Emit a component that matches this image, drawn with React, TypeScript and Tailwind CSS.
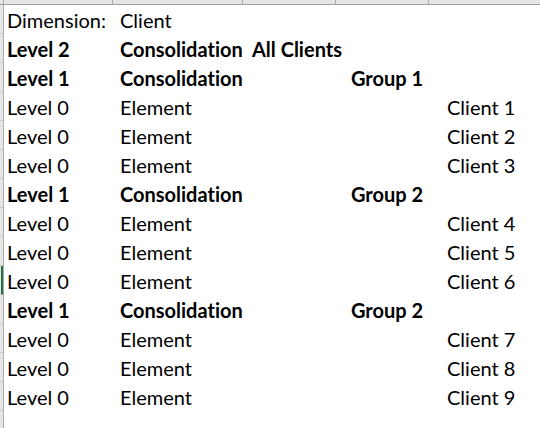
import React from 'react';

type Row = { level: string; kind: string; c?: string; d?: string; e?: string; bold?: boolean };

const rows: Row[] = [
  { level: 'Level 2', kind: 'Consolidation', c: 'All Clients', bold: true },
  { level: 'Level 1', kind: 'Consolidation', d: 'Group 1', bold: true },
  { level: 'Level 0', kind: 'Element', e: 'Client 1' },
  { level: 'Level 0', kind: 'Element', e: 'Client 2' },
  { level: 'Level 0', kind: 'Element', e: 'Client 3' },
  { level: 'Level 1', kind: 'Consolidation', d: 'Group 2', bold: true },
  { level: 'Level 0', kind: 'Element', e: 'Client 4' },
  { level: 'Level 0', kind: 'Element', e: 'Client 5' },
  { level: 'Level 0', kind: 'Element', e: 'Client 6' },
  { level: 'Level 1', kind: 'Consolidation', d: 'Group 2', bold: true },
  { level: 'Level 0', kind: 'Element', e: 'Client 7' },
  { level: 'Level 0', kind: 'Element', e: 'Client 8' },
  { level: 'Level 0', kind: 'Element', e: 'Client 9' },
];

const cols = 'grid grid-cols-[116px_132px_99px_96px_1fr] h-[29px] items-center whitespace-nowrap';

export default function App() {
  return (
    <div className="w-[540px] h-[428px] overflow-hidden bg-white text-black text-[20px] [font-variant-ligatures:none] font-['Lato','Liberation_Sans',sans-serif]">
      {/* column header strip, cut off at the top */}
      <div className="flex h-[5px] bg-[#e6e6e6] border-b border-[#9e9e9e]">
        <div className="w-[4px] border-r border-[#ababab]" />
        <div className="w-[109px] border-r border-[#ababab]" />
        <div className="w-[130px] border-r border-[#ababab]" />
        <div className="w-[93px] border-r border-[#ababab]" />
        <div className="w-[93px] border-r border-[#ababab]" />
        <div className="flex-1" />
      </div>

      <div className="flex">
        {/* row header strip */}
        <div className="w-[4px] flex flex-col bg-[#e6e6e6] border-r border-[#ababab]">
          {Array.from({ length: 15 }).map((_, i) => (
            <div
              key={i}
              className={
                i === 9
                  ? 'h-[29px] border-b border-[#c8c8c8] border-r-2 border-r-[#217346]'
                  : 'h-[29px] border-b border-[#c8c8c8]'
              }
            />
          ))}
        </div>

        <div className="flex-1 flex flex-col">
          <div className={cols}>
            <span className="pl-[3px]">Dimension:</span>
            <span>Client</span>
          </div>
          {rows.map((r, i) => (
            <div key={i} className={cols + (r.bold ? ' font-bold' : '')}>
              <span className="pl-[3px]">{r.level}</span>
              <span>{r.kind}</span>
              <span>{r.c}</span>
              <span>{r.d}</span>
              <span>{r.e}</span>
            </div>
          ))}
        </div>
      </div>
    </div>
  );
}
